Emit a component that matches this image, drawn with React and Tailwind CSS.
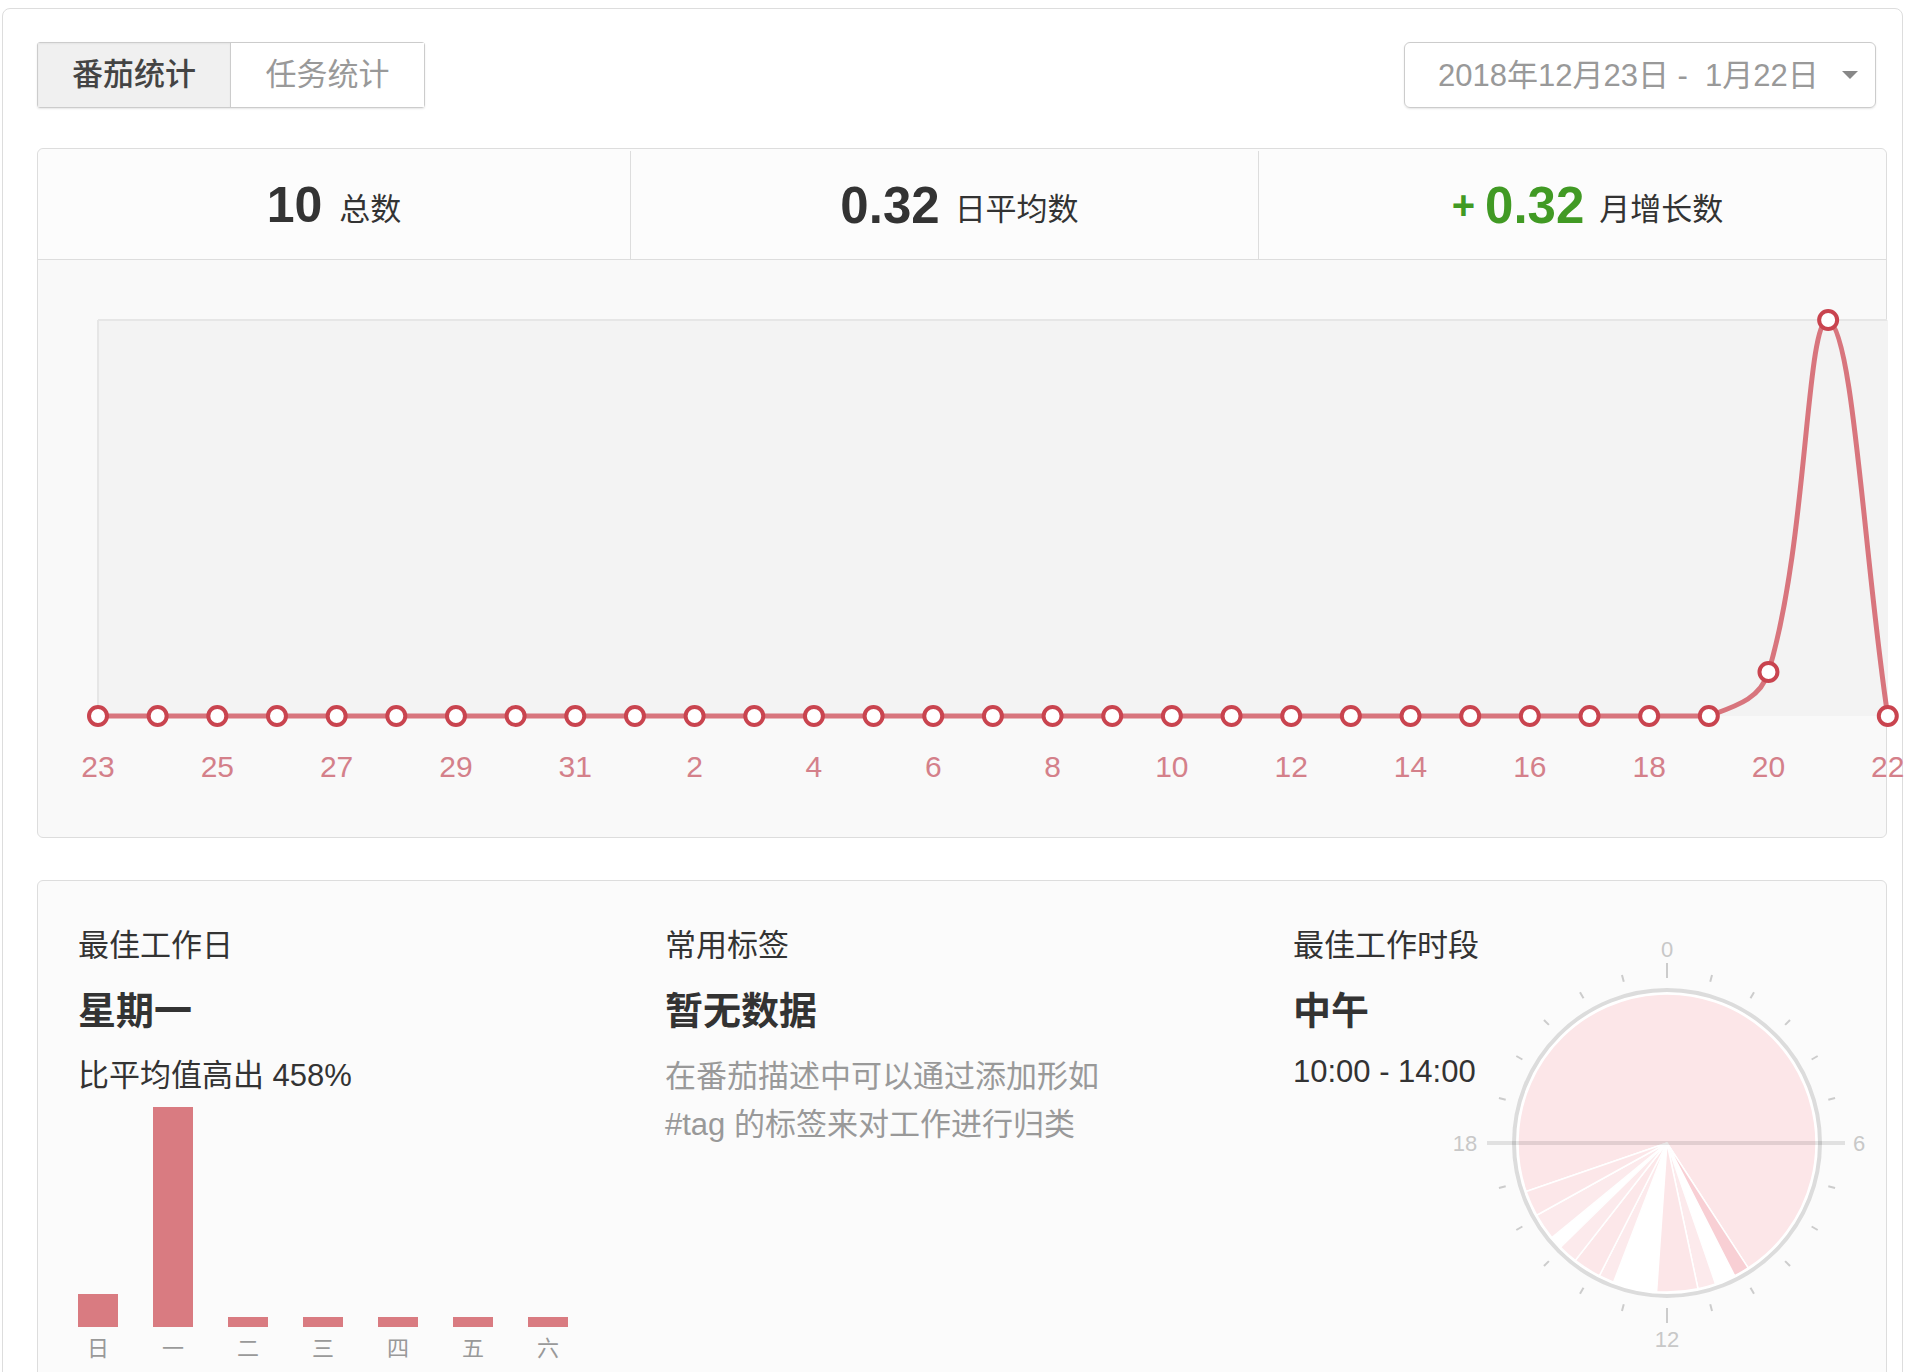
import React from "react";

// chart data: Dec 23 -> Jan 22
const values = Array(31).fill(0);
values[28] = 1;
values[29] = 9;

const X0 = 60;
const DX = 59.66;
const TOP = 60;
const BOTTOM = 456;

const points = values.map((v, i) => ({
  x: X0 + i * DX,
  y: BOTTOM - (v / 9) * (BOTTOM - TOP),
}));

// chart.js style spline control points
const clamp = (v) => Math.max(TOP, Math.min(BOTTOM, v));

const controls = points.map((cur, i) => {
  const prev = points[i - 1] || cur;
  const next = points[i + 1] || cur;
  const d01 = Math.hypot(cur.x - prev.x, cur.y - prev.y);
  const d12 = Math.hypot(next.x - cur.x, next.y - cur.y);
  let s01 = d01 / (d01 + d12);
  let s12 = d12 / (d01 + d12);
  if (isNaN(s01)) s01 = 0;
  if (isNaN(s12)) s12 = 0;
  const fa = 0.4 * s01;
  const fb = 0.4 * s12;
  return {
    px: cur.x - fa * (next.x - prev.x),
    py: clamp(cur.y - fa * (next.y - prev.y)),
    nx: cur.x + fb * (next.x - prev.x),
    ny: clamp(cur.y + fb * (next.y - prev.y)),
  };
});

let linePath = `M${points[0].x},${points[0].y}`;
for (let i = 1; i < points.length; i++) {
  const a = controls[i - 1];
  const b = controls[i];
  linePath += ` C${a.nx},${a.ny} ${b.px},${b.py} ${points[i].x},${points[i].y}`;
}

const dayLabel = (i) => (i <= 8 ? 23 + i : i - 8);

// clock
const CX = 224;
const CY = 221;

const polar = (a, r) => [
  CX + r * Math.sin((a * Math.PI) / 180),
  CY - r * Math.cos((a * Math.PI) / 180),
];

const wedge = (a1, a2, r) => {
  const [x1, y1] = polar(a1, r);
  const [x2, y2] = polar(a2, r);
  const large = a2 - a1 > 180 ? 1 : 0;
  return `M${CX},${CY} L${x1},${y1} A${r},${r} 0 ${large} 1 ${x2},${y2} Z`;
};

const slices = [
  [251, 507, "#fce6e8"],
  [147, 153, "#f8cfd4"],
  [161, 168, "#fceaec"],
  [168, 184, "#fce6e8"],
  [201, 207, "#fceaec"],
  [207, 218, "#fce7e9"],
  [218, 225.6, "#fceaec"],
  [230.6, 241, "#fceaec"],
  [241, 251, "#fce7e9"],
];

const bars = [
  { day: "日", h: 33 },
  { day: "一", h: 220 },
  { day: "二", h: 10 },
  { day: "三", h: 10 },
  { day: "四", h: 10 },
  { day: "五", h: 10 },
  { day: "六", h: 10 },
];

function Clock() {
  return (
    <svg width="450" height="450" viewBox="0 0 450 450" className="shrink-0 overflow-visible">
      <circle cx={CX} cy={CY} r="153" fill="#ffffff" stroke="#dcdcdc" strokeWidth="4" />
      {slices.map((s, i) => (
        <path key={i} d={wedge(s[0], s[1], 149)} fill={s[2]} stroke="#ffffff" strokeWidth="1.5" />
      ))}
      <line x1="44" y1={CY} x2="402" y2={CY} stroke="rgba(0,0,0,0.1)" strokeWidth="4" />
      {Array.from({ length: 24 }).map((_, h) => {
        if (h === 6 || h === 18) return null;
        const long = h === 0 || h === 12;
        const [x1, y1] = polar(h * 15, long ? 165 : 167);
        const [x2, y2] = polar(h * 15, long ? 180 : 174);
        return (
          <line key={h} x1={x1} y1={y1} x2={x2} y2={y2} stroke="#cccccc" strokeWidth="2" />
        );
      })}
      <g fill="#c8c8c8" fontSize="22" textAnchor="middle" dominantBaseline="central">
        <text x={CX} y="27">0</text>
        <text x={CX} y="417">12</text>
        <text x="22" y={CY}>18</text>
        <text x="416" y={CY}>6</text>
      </g>
    </svg>
  );
}

function App() {
  return (
    <div className="min-h-screen bg-white font-['Liberation_Sans','Noto_Sans_CJK_SC',sans-serif]">

      <div className="ml-[2px] mt-[8px] w-[1901px] rounded-lg border border-[#dddddd] bg-white pl-[34px] pr-[15px] pt-[33px] pb-[60px]">

        {/* HEADER */}
        <div className="flex items-center justify-between">

          <div className="flex h-[66px] rounded-[3px] border border-[#cccccc] shadow-[0_1px_2px_rgba(0,0,0,0.1)]">
            <div className="flex w-[193px] items-center justify-center border-r border-[#cccccc] bg-[#f0f0f0] text-[31px] font-medium text-[#444444] shadow-[inset_0_1px_2px_rgba(0,0,0,0.05)]">
              番茄统计
            </div>
            <div className="flex w-[193px] items-center justify-center bg-white text-[31px] text-[#999999]">
              任务统计
            </div>
          </div>

          <div className="mr-[11px] flex h-[66px] w-[472px] items-center rounded-md border border-[#cccccc] pl-[33px] pr-[17px] shadow-[0_1px_2px_rgba(0,0,0,0.1)]">
            <span className="mt-[3px] flex-1 whitespace-pre text-[31px] text-[#999999]">
              2018年12月23日 -  1月22日
            </span>
            <span className="h-0 w-0 border-x-[8px] border-t-[8px] border-x-transparent border-t-[#888888]"></span>
          </div>

        </div>

        {/* STATS + LINE CHART */}
        <div className="mt-[40px] rounded-md border border-[#dddddd] bg-[#f9f9f9]">

          <div className="flex h-[111px] rounded-t-md border-b border-[#dddddd] bg-[#fcfcfc] pt-[2px] text-[#333333]">
            <div className="flex w-[593px] items-center justify-center border-r border-[#dddddd]">
              <span className="text-[50px] font-bold leading-none">10</span>
              <span className="ml-[17px] mt-[10px] text-[31px]">总数</span>
            </div>
            <div className="flex w-[628px] items-center justify-center border-r border-[#dddddd] pl-[30px]">
              <span className="text-[51px] font-bold leading-none">0.32</span>
              <span className="ml-[15px] mt-[10px] text-[31px]">日平均数</span>
            </div>
            <div className="flex flex-1 items-center justify-center pl-[30px]">
              <span className="mr-[10px] text-[40px] font-bold leading-none text-[#419a24]">+</span>
              <span className="text-[51px] font-bold leading-none text-[#419a24]">0.32</span>
              <span className="ml-[15px] mt-[10px] text-[31px]">月增长数</span>
            </div>
          </div>

          <div className="h-[577px]">
            <svg width="1848" height="577" className="overflow-visible">
              <rect x={X0} y={TOP} width={1790} height={BOTTOM - TOP} fill="#f3f3f3" />
              <line x1={X0} y1={TOP} x2={1849} y2={TOP} stroke="#e6e6e6" strokeWidth="2" />
              <line x1={X0} y1={TOP} x2={X0} y2={BOTTOM} stroke="#e6e6e6" strokeWidth="2" />
              <path d={linePath} fill="none" stroke="#d8757d" strokeWidth="5" />
              {points.map((p, i) => (
                <circle key={i} cx={p.x} cy={p.y} r="9" fill="#ffffff" stroke="#c9444f" strokeWidth="4" />
              ))}
              {points.map((p, i) =>
                i % 2 === 0 ? (
                  <text
                    key={i}
                    x={p.x}
                    y="506"
                    fill="#d4808a"
                    fontSize="30"
                    textAnchor="middle"
                    dominantBaseline="central"
                  >
                    {dayLabel(i)}
                  </text>
                ) : null
              )}
            </svg>
          </div>

        </div>

        {/* BOTTOM STATS */}
        <div className="mt-[42px] flex rounded-md border border-[#dddddd] bg-[#fbfbfb] pl-[40px] pt-[43px] pb-[40px] text-[#333333]">

          {/* BEST DAY */}
          <div className="w-[587px] shrink-0">
            <div className="text-[31px] leading-[44px]">最佳工作日</div>
            <div className="mt-[17px] text-[38px] font-bold leading-[52px]">星期一</div>
            <div className="mt-[17px] text-[31px] leading-[44px]">比平均值高出 458%</div>

            <div className="flex h-[229px] items-end gap-[35px]">
              {bars.map((b) => (
                <div
                  key={b.day}
                  className="w-[40px] bg-[#d97b81]"
                  style={{ height: b.h }}
                ></div>
              ))}
            </div>

            <div className="mt-[7px] flex gap-[35px]">
              {bars.map((b) => (
                <div key={b.day} className="w-[40px] text-center text-[22px] leading-[30px] text-[#999999]">
                  {b.day}
                </div>
              ))}
            </div>
          </div>

          {/* TAGS */}
          <div className="w-[628px] shrink-0">
            <div className="text-[31px] leading-[44px]">常用标签</div>
            <div className="mt-[17px] text-[38px] font-bold leading-[52px]">暂无数据</div>
            <div className="mt-[16px] text-[31px] leading-[48px] text-[#999999]">
              在番茄描述中可以通过添加形如
              <br />
              #tag 的标签来对工作进行归类
            </div>
          </div>

          {/* BEST TIME */}
          <div className="flex flex-1">
            <div className="w-[150px] shrink-0 whitespace-nowrap">
              <div className="text-[31px] leading-[44px]">最佳工作时段</div>
              <div className="mt-[17px] text-[38px] font-bold leading-[52px]">中午</div>
              <div className="mt-[13px] text-[31px] leading-[44px]">10:00 - 14:00</div>
            </div>
            <div className="-mt-[2px]">
              <Clock />
            </div>
          </div>

        </div>

      </div>

    </div>
  );
}

export default App;
